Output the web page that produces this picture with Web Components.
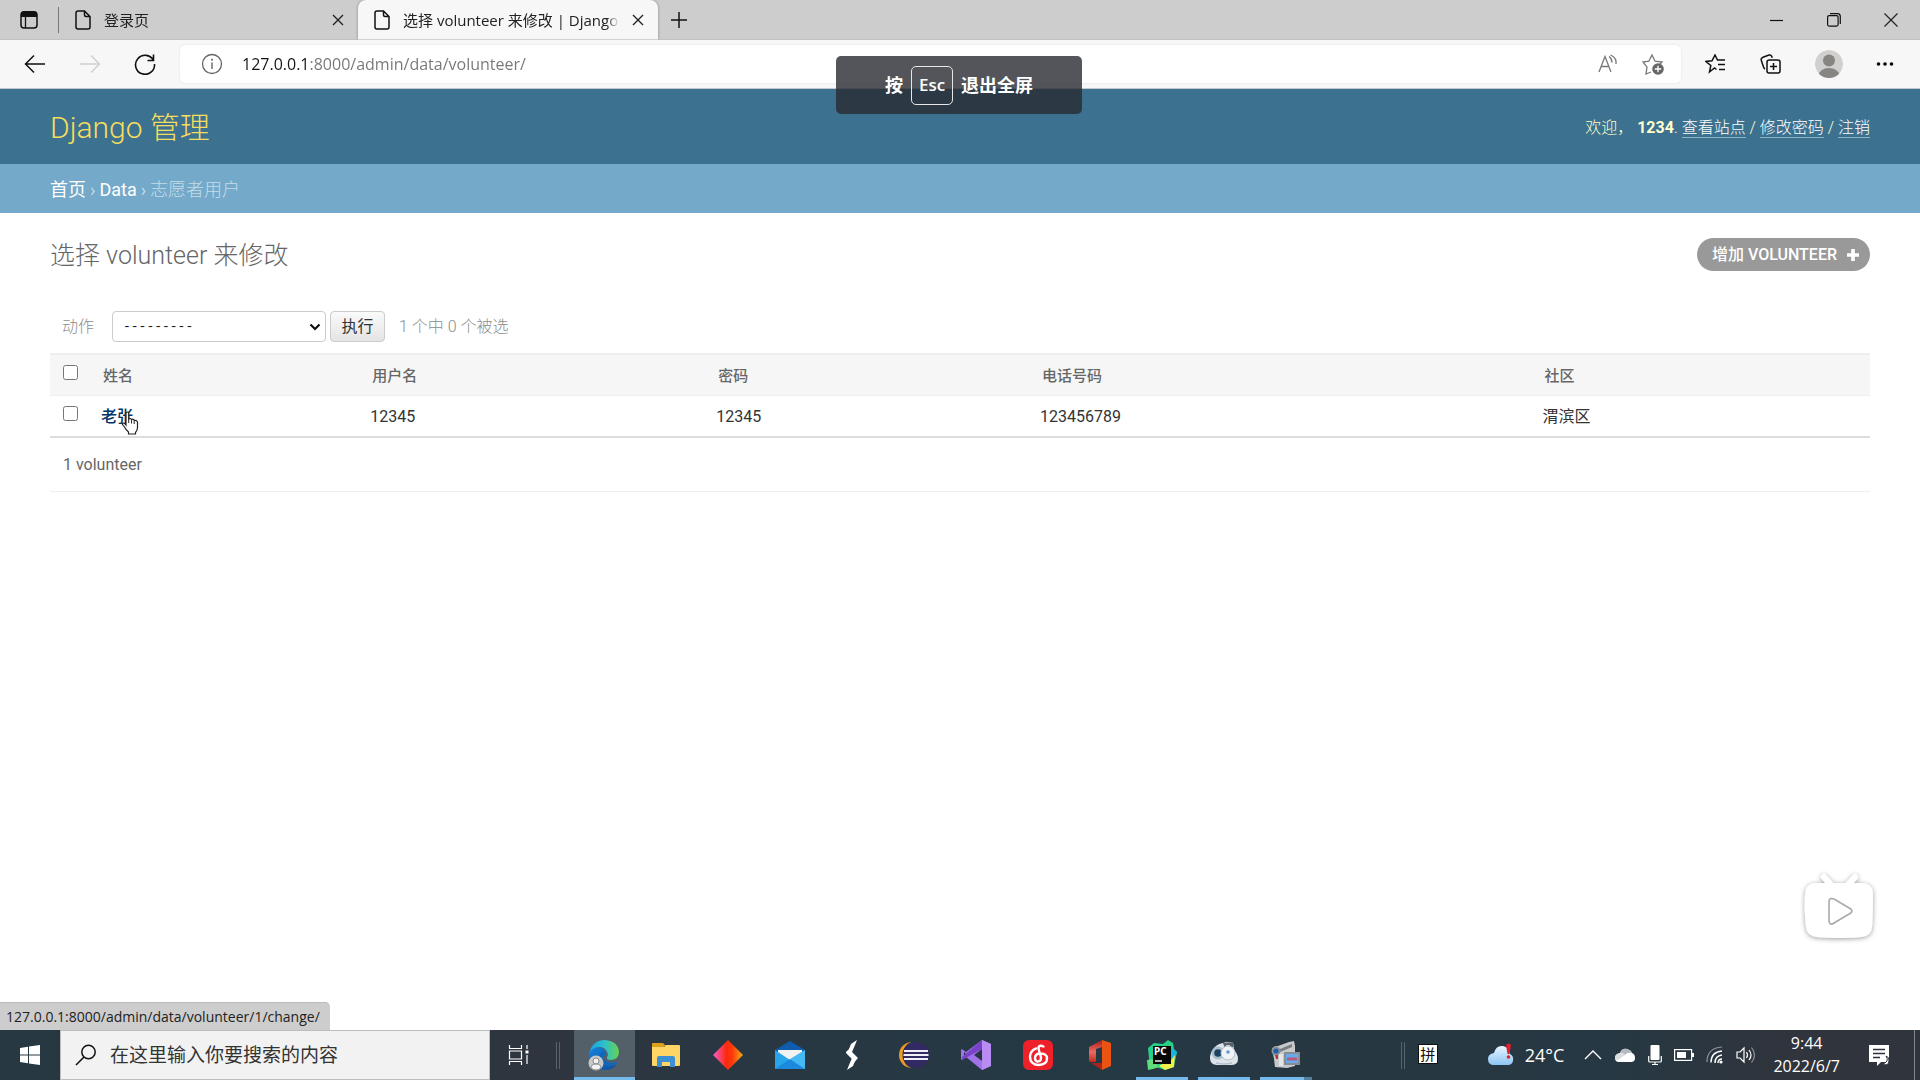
<!DOCTYPE html>
<html lang="zh-CN">
<head>
<meta charset="utf-8">
<meta name="viewport" content="width=device-width, initial-scale=1">
<title>选择 volunteer 来修改 | Django 站点管理员</title>
<style>
  :root {
    --ui: "Open Sans", "Noto Sans CJK SC", sans-serif;
    --admin: Roboto, "Noto Sans CJK SC", sans-serif;
  }
  html, body { height: 100%; }
  body { margin: 0; overflow: hidden; background: #fff; font-family: var(--ui); }
</style>
</head>
<body>
<desktop-screen></desktop-screen>

<script>
const base = `*{box-sizing:border-box}button,input,select{font:inherit;color:inherit;margin:0}button{display:inline-flex;align-items:center;justify-content:center;border:0;background:none;padding:0}a{color:inherit;text-decoration:none}`;

function define(name, css, html) {
  const template = document.createElement('template');
  template.innerHTML = `<style>${base}${css}</style>${html}`;
  customElements.define(name, class extends HTMLElement {
    constructor() {
      super();
      this.attachShadow({ mode: 'open' }).append(template.content.cloneNode(true));
    }
  });
}

/* name: [width, height, markup] */
const icons = {
  tabs: [18, 20, `<rect x="1" y="2" width="16" height="16" rx="3" fill="none" stroke="#111" stroke-width="1.5"/><path d="M1 4q0-3 3-3h10q3 0 3 3v3H1z" fill="#111"/><path d="M5.500 7v11" stroke="#111" stroke-width="1.300"/>`],
  page: [16, 20, `<path d="M3 1h6.500L15 6.500V17q0 2-2 2H3q-2 0-2-2V3q0-2 2-2zM9.500 1v4q0 1.500 1.500 1.500h4" fill="none" stroke="#111" stroke-width="1.500"/>`],
  close: [12, 12, `<path d="M1 1l10 10M11 1L1 11" stroke="#222" stroke-width="1.400"/>`],
  plus: [18, 18, `<path d="M9 1v16M1 9h16" stroke="#111" stroke-width="1.500"/>`],
  min: [14, 14, `<path d="M0 7.500h13" stroke="#111" stroke-width="1.200"/>`],
  max: [14, 14, `<rect x=".6" y="2.600" width="10.500" height="10.500" rx="1.500" fill="none" stroke="#111" stroke-width="1.200"/><path d="M3 .7h7.500q2.800 0 2.800 2.800v7.500" fill="none" stroke="#111" stroke-width="1.200"/>`],
  exit: [14, 14, `<path d="M.5.5l13 13M13.500.5l-13 13" stroke="#222" stroke-width="1.200"/>`],
  back: [22, 20, `<path d="M21 10H1.500M10 1.500L1.500 10l8.500 8.500" fill="none" stroke="#111" stroke-width="1.500"/>`],
  forward: [22, 20, `<path d="M1 10h19.500M12 1.500l8.500 8.500-8.500 8.500" fill="none" stroke="#cfcfcf" stroke-width="1.500"/>`],
  reload: [22, 22, `<path d="M19.500 7.500A9.500 9.500 0 1 0 20.500 11M19.500 1.500v6h-6" fill="none" stroke="#111" stroke-width="1.600"/>`],
  info: [22, 22, `<circle cx="11" cy="11" r="9.500" fill="none" stroke="#666" stroke-width="1.300"/><path d="M11 9.500V16" stroke="#666" stroke-width="1.400"/><circle cx="11" cy="6.800" r="1" fill="#666"/>`],
  aloud: [20, 20, `<path d="M1 18L7 2.500 13 18M3.200 12.500h7.600M11 2.500q3 2 3 6M12.500 1q6.500 3 5.500 9" fill="none" stroke="#777" stroke-width="1.300"/>`],
  staradd: [22, 22, `<path d="M9 19l-5 2 1-6.800L1 9l5.800-.8L10 2l3 6.200 7 .8-2 2" fill="none" stroke="#777" stroke-width="1.300"/><circle cx="16" cy="16" r="5.800" fill="#666"/><path d="M16 12.800v6.400M12.800 16h6.400" stroke="#fff" stroke-width="1.300"/>`],
  favs: [22, 20, `<path d="M11.500 15.500L9.500 14 4.500 18l1.300-6.500L1 7.500l6-.7L10 1l2.500 5H20M13 10.500h7M14 15.500h6" fill="none" stroke="#111" stroke-width="1.500"/>`],
  collect: [22, 20, `<path d="M5 15q-1-.5-1.500-2L1.200 6Q.8 4 3 3.200L9 1q2-.5 2.800 1.500l.4 1.200M9.500 6h8Q20 6 20 8v9q0 2-2 2H9q-2 0-2-2V8q0-2 2.500-2M13.500 9v7M10 12.500h7" fill="none" stroke="#111" stroke-width="1.500"/>`],
  avatar: [28, 28, `<clipPath id="c"><circle cx="14" cy="14" r="14"/></clipPath><g clip-path="url(#c)"><circle cx="14" cy="14" r="14" fill="#d2d0ce"/><circle cx="14" cy="10.500" r="6" fill="#878581"/><ellipse cx="14" cy="26" rx="10.500" ry="8" fill="#878581"/></g>`],
  dots: [18, 6, `<circle cx="2.500" cy="3" r="1.800"/><circle cx="9" cy="3" r="1.800"/><circle cx="15.500" cy="3" r="1.800"/>`],
  add: [14, 14, `<path d="M7 1v12M1 7h12" stroke="#fff" stroke-width="3.600"/>`],
  chevron: [12, 8, `<path d="M1.500 1.500L6 6l4.500-4.500" fill="none" stroke="#111" stroke-width="2.200"/>`],
  hand: [18, 24, `<path d="M5 14V2.500Q5 1 6.300 1T7.700 2.500V9q0-1.500 1.300-1.500T10.500 9v.5q0-1.300 1.300-1.300T13.200 9.500v1q0-1.200 1.200-1.200T16.500 11v5.500q0 3-2 5v1.500H7.500v-2Q5 19 3.500 16L1.500 13.500Q1 12 2.200 12 3.500 12 5 14z" fill="#fff" stroke="#222" stroke-width="1.200"/><path d="M7.700 9v3M10.500 9.500v3M13.200 10.500v2.500" stroke="#222"/>`],
  tv: [80, 80, `<defs><filter id="s" x="-20%" y="-20%" width="140%" height="140%"><feDropShadow dx="0" dy="1" stdDeviation="2.500" flood-opacity=".4"/></filter><filter id="p" x="-20%" y="-20%" width="140%" height="140%"><feGaussianBlur stdDeviation=".7"/></filter></defs><g filter="url(#s)"><path d="M25 11l8 9M56 11l-8 9" stroke="#fff" stroke-width="6" stroke-linecap="round"/><path d="M18 17h44q12 0 12 12 0 14-1 32-.5 9-11 10-22 2-44 0Q8 70 7 61 5 44 6 29 6 17 18 17z" fill="#fff"/></g><path d="M30 36q0-5 5-3l16 9.500q4 2.500 0 5L35 57q-4 3-5-2z" fill="#fff" stroke="#aaa" stroke-width="1.600" filter="url(#p)"/>`],
  start: [20, 20, `<path d="M0 3l8-1.200V9.500H0zM9 1.600L20 0v9.500H9zM0 10.500h8v7.700L0 17zM9 10.500h11V20L9 18.400z" fill="#fff"/>`],
  search: [22, 22, `<circle cx="13.500" cy="8" r="6.700" fill="none" stroke="#111" stroke-width="1.500"/><path d="M9 13L1 21" stroke="#111" stroke-width="1.600"/>`],
  taskview: [22, 20, `<path d="M1.500 0v3.500h12V0M1.500 20v-3.500h12V20M1.500 6h12v8h-12zM19 0v4M19 10v9" fill="none" stroke="#fff" stroke-width="1.200"/><path d="M17.500 5.500h3v3h-3z" fill="#fff"/>`],
  edge: [32, 32, `<defs><linearGradient id="a"><stop stop-color="#1f9fe0"/><stop offset=".5" stop-color="#2bbfd0"/><stop offset="1" stop-color="#66d34f"/></linearGradient><linearGradient id="b" x2="1" y2="1"><stop stop-color="#1583dc"/><stop offset="1" stop-color="#0c4c9c"/></linearGradient></defs><path d="M1 15Q3 8 10 8q8 1 8 8-5 2-4 6 2 5 9 5 4 0 6-2-4 6-12 6Q2 30 1 15z" fill="url(#b)"/><path d="M1 15Q4 1 17 1q13 1 14 12 0 7-8 8-5 0-4-3 2-2 0-5-2-5-8-5Q4 8 1 15z" fill="url(#a)"/><path d="M13 14q-5 6 1 11 6 4 15 0l1-2q-9 2-13-2-3-3-1-7 0-3-3 0z" fill="#1266b8"/><circle cx="8" cy="24" r="7.500" fill="#c9c9c9"/><circle cx="8" cy="22" r="3" fill="#f2f2f2" stroke="#8a8a8a"/><path d="M3 29q0-4 5-4t5 4q-5 4-10 0z" fill="#f2f2f2" stroke="#8a8a8a"/>`],
  folder: [30, 26, `<path d="M1 2q0-1 1-1h10l3 3h-2v8H1z" fill="#e0a11a"/><path d="M1 5h12l2-2h13q1 0 1 1v19q0 1-1 1H2q-1 0-1-1z" fill="#ffd666"/><path d="M6 25V16q0-2 2-2h14q2 0 2 2v9h-5v-5h-8v5z" fill="#3d8fd6"/>`],
  diamond: [30, 30, `<defs><linearGradient id="d"><stop stop-color="#f55fd0"/><stop offset=".45" stop-color="#fb2a0d"/><stop offset=".65" stop-color="#fb3a0d"/><stop offset="1" stop-color="#f5b010"/></linearGradient></defs><path d="M15 0l15 15-15 15L0 15z" fill="url(#d)"/>`],
  mail: [30, 28, `<path d="M0 9L15 0l15 9v6H0z" fill="#0e5cab"/><path d="M3 9h24v10H3z" fill="#f2f2f2"/><path d="M0 9l15 10L30 9v19H0z" fill="#28a4ea"/><path d="M0 28h30L15 18z" fill="#1b8ade"/><path d="M30 9v19L15 18z" fill="#46b9f5"/>`],
  bolt: [16, 30, `<path d="M2 12l6-6v6l6 6-6 7v-6l-6-6z" fill="#fff"/><path d="M13 0L7 4 5 9l3 3 3-7zM3 30l6-4 2-5-3-3-3 7z" fill="#fff"/>`],
  eclipse: [32, 30, `<circle cx="14" cy="15" r="13" fill="#f09a26"/><circle cx="18.500" cy="15" r="14" fill="#2a3742"/><circle cx="18" cy="15" r="13" fill="#322a62"/><path d="M6 11h24M5.500 15h25M6 19h24" stroke="#f1eefa" stroke-width="2.200"/>`],
  vs: [30, 30, `<path d="M21 0l9 4v22l-9 4L5 17l-4 3-1-1V10l1-1 4 3z" fill="#a273e8"/><path d="M21 0v30l9-4V4z" fill="#b98cf4"/><path d="M21 9v12l-8-6zM3 12v6l3-3z" fill="#263743"/><path d="M1 20L21 9V0L1 17z" fill="#7a42c8"/>`],
  music: [30, 30, `<rect width="30" height="30" rx="6" fill="#ee2029"/><path d="M20.500 6.500q-4-2-5 1 0 1 .5 3l2 7q0 4-3 4t-3-3.500q0-3.500 4-4.500 8-.5 8 5 0 6-8.500 6.500-8.500-.5-8.500-8.500.5-6 6-8" fill="none" stroke="#fff" stroke-width="2.400" stroke-linecap="round"/>`],
  office: [24, 30, `<defs><linearGradient id="o" x2="0" y2="1"><stop stop-color="#a51d16"/><stop offset=".55" stop-color="#ee6a65"/><stop offset="1" stop-color="#c32a16"/></linearGradient></defs><path d="M1 7L14 0v7L8 9v13H2l-1-1z" fill="url(#o)"/><path d="M14 0l9 3v23l-9 4z" fill="#eb5312"/><path d="M3 23h11v7z" fill="#a92519"/>`],
  pycharm: [30, 30, `<path d="M1 8l6-5 9 1 5-4 5 3 1 6 3 3-2 9-1 6-9 3-9-3-6 2z" fill="#24d186"/><path d="M22 20l5 2v5l-9 3-6-4z" fill="#eff04c"/><path d="M24 8l6 4-3 9-3 1z" fill="#15b5ea"/><path d="M24 20l4-5-1 11-4 1z" fill="#f4ee44"/><path d="M0 20l6-1 6 8-6 2-5 1z" fill="#5fdd7a"/><rect x="6" y="6" width="18" height="18" fill="#080808"/><path d="M8 21h7" stroke="#fff" stroke-width="1.400"/><text x="7" y="15" font-family="Noto Sans" font-weight="700" font-size="10" fill="#fff">PC</text>`],
  camera: [30, 28, `<path d="M5 7q3-4 9-5l3-1h7l1 8q4 4 4 9 0 6-7 6H8q-7 0-7-7Q1 12 5 7z" fill="#dde4ea"/><path d="M14 2l10-1v5l-8 2z" fill="#59626b"/><path d="M17 4h4v3h-4z" fill="#cfd5da"/><circle cx="9" cy="12" r="6.500" fill="#a9bfce"/><circle cx="9" cy="12" r="3.800" fill="#1c4161"/><circle cx="19" cy="12" r="7" fill="#f0f4f7" stroke="#b3bec8"/><circle cx="19" cy="11" r="1.800" fill="#5c9ad4"/><path d="M7 22q8 2 16 0" stroke="#b4c0ca" stroke-width="1.500" fill="none"/>`],
  camcorder: [30, 28, `<path d="M1 8q1-3 6-3l11-4 5-1 1 5v20l-8 2-12-1-1-8z" fill="#c7c9cb"/><path d="M9 8l12-5v3L9 11z" fill="#777c80"/><circle cx="5" cy="10" r="4.500" fill="#8a9296"/><circle cx="5" cy="10" r="2.600" fill="#1d5fae"/><path d="M4 14h3v4H5z" fill="#b2392f"/><path d="M8 13h4v12H8z" fill="#e4e5e6"/><rect x="13" y="11" width="16" height="13" fill="#868e94"/><rect x="15" y="13" width="12" height="9" fill="#69a9ee"/><path d="M16 18h10" stroke="#b65a7c" stroke-width="3"/>`],
  weather: [28, 24, `<defs><linearGradient id="w" x2="0" y2="1"><stop stop-color="#e8f6ff"/><stop offset="1" stop-color="#8cc5f3"/></linearGradient></defs><path d="M7 22q-6 0-6-6 0-5 6-6Q9 2 16 3q6 1 7 8 4 2 3 7-1 4-5 4z" fill="url(#w)"/><path d="M19 2q3-3 5 0l-1.500 9h-2z" fill="#e41e2d"/><circle cx="21.500" cy="14" r="1.800" fill="#e41e2d"/>`],
  up: [18, 12, `<path d="M1 10l8-8 8 8" fill="none" stroke="#fff" stroke-width="1.400"/>`],
  cloud: [22, 16, `<path d="M5 15Q1 15 1 11t5-5q2-5 7-4 4 1 5 4 3 1 3 5 0 4-4 4z" fill="#fff"/><path d="M6 6q2-5 7-4 4 1 5 4-5-1-7 2Q8 5 6 6z" fill="#b5bac0"/><path d="M1 12q-1-5 5-6 3 0 5 2l-7 5z" fill="#d9dde0"/>`],
  mic: [14, 20, `<rect x="2.500" width="9" height="15" rx="1" fill="#fff"/><path d="M.7 11v5q0 1 1 1h10.600q1 0 1-1v-5M7 17v3M4 19.500h6" fill="none" stroke="#fff" stroke-width="1.200"/>`],
  battery: [20, 12, `<rect x=".6" y=".6" width="17" height="10.800" fill="none" stroke="#fff" stroke-width="1.200"/><path d="M3 3h9v6H3zM18 4h2v4h-2z" fill="#fff"/>`],
  wifi: [18, 18, `<path d="M1 16Q1 2 16 1" fill="none" stroke="#8c959d" stroke-width="1.200"/><path d="M5 16.500Q5 6 16 5M9 17q0-7 7-8M12 17q0-4 4-4" fill="none" stroke="#fff" stroke-width="1.400"/><circle cx="15" cy="16" r="1.600" fill="#fff"/>`],
  volume: [20, 18, `<path d="M1 6h3l4-4v14l-4-4H1z" fill="none" stroke="#fff" stroke-width="1.200"/><path d="M10.500 6q2 3 0 6M13 4q4 5 0 10" fill="none" stroke="#fff" stroke-width="1.200"/><path d="M15.500 1.500q6 7.500 0 15" fill="none" stroke="#8c959d" stroke-width="1.200"/>`],
  notice: [22, 22, `<path d="M1 1h20v17h-8l-4 4v-4H1z" fill="#fff"/><path d="M5 5.500h12M5 9.500h12M5 13.500h7" stroke="#2c333c" stroke-width="1.300"/><path d="M18 12q4 6-4 8 7 3 7-4 0-3-3-4z" fill="#fff" stroke="#2c333c"/>`]
};

customElements.define('ui-icon', class extends HTMLElement {
  connectedCallback() {
    if (this.shadowRoot) return;
    const [w, h, body] = icons[this.getAttribute('name')];
    this.attachShadow({ mode: 'open' }).innerHTML =
      `<style>:host{display:inline-flex;flex:none}svg{display:block}</style><svg width="${w}" height="${h}" viewBox="0 0 ${w} ${h}" aria-hidden="true">${body}</svg>`;
  }
});

/* Browser chrome */
define('browser-tab', `
  :host{display:flex;align-items:center;width:299px;height:40px;padding:0 14px 0 16px;gap:13px;font-size:15px;line-height:22px;color:#222}
  :host([active]){background:#f7f7f7;border-radius:8px 8px 0 0;box-shadow:0 0 3px rgba(0,0,0,.35);clip-path:inset(0 -4px 0 -4px);width:300px}
  .t{flex:1;min-width:0;overflow:hidden;white-space:nowrap;mask-image:linear-gradient(90deg,#000 calc(100% - 12px),transparent)}`,
  `<ui-icon name="page"></ui-icon><span class="t"><slot></slot></span><button aria-label="关闭标签页"><ui-icon name="close"></ui-icon></button>`);

define('tab-strip', `
  :host{display:flex;align-items:center;height:40px;flex:none;background:#cdcdcd;border-bottom:1px solid #c2c2c2}
  .menu{padding:0 20px;height:26px;border-right:1px solid #777}
  .new{margin-left:12px}
  .win{margin-left:auto;display:flex;gap:43px;padding-right:22px}`,
  `<button class="menu" aria-label="标签操作菜单"><ui-icon name="tabs"></ui-icon></button>
   <browser-tab>登录页</browser-tab><browser-tab active>选择 volunteer 来修改 | Django 站点管理员</browser-tab>
   <button class="new" aria-label="新建标签页"><ui-icon name="plus"></ui-icon></button>
   <div class="win"><button aria-label="最小化"><ui-icon name="min"></ui-icon></button><button aria-label="还原"><ui-icon name="max"></ui-icon></button><button aria-label="关闭"><ui-icon name="exit"></ui-icon></button></div>`);

define('address-bar', `
  :host{display:flex;align-items:center;height:49px;flex:none;background:#f7f7f7;border-bottom:1px solid #c4c8ca;padding:0 26px 0 24px}
  .nav{display:flex;align-items:center;gap:33px;width:156px}
  .box{flex:1;display:flex;align-items:center;height:38px;background:#fff;border-radius:6px;padding:0 17px 0 21px;box-shadow:0 0 3px rgba(0,0,0,.08)}
  input{flex:1;min-width:0;border:0;outline:0;padding:0;margin-left:19px;height:28px;font-size:16px;color:#767676;
    background:linear-gradient(90deg,#151515 67px,#767676 67px);background-clip:text;-webkit-background-clip:text;-webkit-text-fill-color:transparent}
  .in{display:flex;gap:24px;align-items:center}
  .tools{display:flex;align-items:center;gap:33px;padding-left:24px}`,
  `<div class="nav"><button aria-label="后退"><ui-icon name="back"></ui-icon></button><button aria-label="前进"><ui-icon name="forward"></ui-icon></button><button aria-label="刷新"><ui-icon name="reload"></ui-icon></button></div>
   <div class="box"><ui-icon name="info"></ui-icon><input aria-label="地址" value="127.0.0.1:8000/admin/data/volunteer/">
   <div class="in"><button aria-label="大声朗读"><ui-icon name="aloud"></ui-icon></button><button aria-label="添加到收藏夹"><ui-icon name="staradd"></ui-icon></button></div></div>
   <div class="tools"><button aria-label="收藏夹"><ui-icon name="favs"></ui-icon></button><button aria-label="集锦"><ui-icon name="collect"></ui-icon></button><button aria-label="个人资料"><ui-icon name="avatar"></ui-icon></button><button aria-label="设置及其他"><ui-icon name="dots"></ui-icon></button></div>`);

define('fullscreen-hint', `
  :host{position:absolute;left:calc(50% - 124px);top:56px;width:246px;height:58px;display:flex;align-items:center;justify-content:center;gap:8px;border-radius:5px;background:rgba(40,43,49,.8);color:#fff;font-size:18px;line-height:24px;font-weight:700}
  kbd{font:inherit;font-size:17px;font-weight:600;border:1px solid #e6e6e6;border-radius:5px;width:42px;height:39px;display:flex;align-items:center;justify-content:center}`,
  `<span>按</span><kbd>Esc</kbd><span>退出全屏</span>`);

/* Admin site */
define('admin-header', `
  :host{display:flex;align-items:center;justify-content:space-between;height:75px;flex:none;padding:3px 50px 0;background:#3c7190;color:#ffc}
  h1{margin:0;font-size:30px;font-weight:300;line-height:36px;color:#f5dd5d}
  .u{font-size:16px;font-weight:300;line-height:20px;white-space:pre}
  .u a{color:#fff;border-bottom:1px solid #8fb1c4}
  b{font-weight:700}`,
  `<h1>Django 管理</h1><div class="u">欢迎， <b>1234</b>. <a href="#">查看站点</a> / <a href="#">修改密码</a> / <a href="#">注销</a></div>`);

define('bread-crumbs', `
  :host{display:flex;align-items:center;gap:4px;height:49px;flex:none;padding:2px 50px 0;background:#74a9c9;color:#c4dce8;font-size:18px;line-height:24px}
  a{color:#fff}span{font-weight:300}i{font-style:normal}`,
  `<a href="#">首页</a><i>›</i><a href="#">Data</a><i>›</i><span>志愿者用户</span>`);

define('page-title', `
  :host{display:flex;align-items:flex-start;justify-content:space-between;padding:25px 0 0}
  h2{margin:0;font-size:25px;line-height:36px;font-weight:300;color:#666}
  a{display:flex;align-items:center;gap:9px;height:33px;border-radius:17px;padding:0 10px 0 15px;background:#999;color:#fff;font-size:16px;line-height:24px;font-weight:500;text-transform:uppercase}`,
  `<h2><slot></slot></h2><a href="#">增加 volunteer<ui-icon name="add"></ui-icon></a>`);

define('action-bar', `
  :host{display:flex;align-items:center;padding:0 12px;margin-top:37px;height:31px;color:#8c8c8c;font-size:16px;line-height:24px;font-weight:300}
  label{display:flex;align-items:center;gap:18px}
  .s{display:grid;align-items:center;width:214px}
  .s>*{grid-area:1/1}
  .s ui-icon{justify-self:end;margin-right:5px;pointer-events:none}
  select{appearance:none;width:100%;height:31px;padding:0 10px;border:1px solid #ccc;border-radius:4px;background:#fff;color:#111;font:13px "Liberation Mono",monospace}
  button{margin:0 14px 0 4px;width:55px;height:31px;border:1px solid #ccc;border-radius:4px;background:linear-gradient(#fafafa,#e4e4e4);color:#333;font-weight:400}`,
  `<label>动作 <span class="s"><select><option>---------</option></select><ui-icon name="chevron"></ui-icon></span></label><button>执行</button><span>1 个中 0 个被选</span>`);

define('result-list', `
  :host{display:block;margin-top:11px;color:#333;font-size:16px}
  table{width:100%;border-collapse:separate;border-spacing:0;table-layout:fixed}
  th,td{height:42px;padding:2px 10px 0;text-align:left;line-height:24px;border-bottom:1px solid #eee;vertical-align:middle}
  td{border-bottom:2px solid #ddd}
  thead th{background:#f6f6f6;border-top:2px solid #eee;height:43px;font-size:15px;font-weight:500;color:#666;padding-left:12px}
  thead th:first-child,th:first-child,td:first-child{padding:0 0 0 13px}
  input{display:block;width:15px;height:15px;margin-bottom:5px}
  tbody a{position:relative;font-weight:500;color:#036}
  tbody a ui-icon{position:absolute;left:20px;top:4px}
  tfoot td{height:54px;border-bottom:1px solid #eee;color:#666}
  .c0{width:41px}.c1{width:14.8%}.c2{width:19%}.c3{width:17.8%}.c4{width:27.6%}`,
  `<table><colgroup><col class="c0"><col class="c1"><col class="c2"><col class="c3"><col class="c4"><col></colgroup>
   <thead><tr><th><input type="checkbox" aria-label="全选"></th><th>姓名</th><th>用户名</th><th>密码</th><th>电话号码</th><th>社区</th></tr></thead>
   <tbody><tr><td><input type="checkbox" aria-label="选择老张"></td><td><a href="#">老张<ui-icon name="hand"></ui-icon></a></td><td>12345</td><td>12345</td><td>123456789</td><td>渭滨区</td></tr></tbody>
   <tfoot><tr><td colspan="6">1 volunteer</td></tr></tfoot></table>`);

define('admin-page', `
  :host{flex:1;min-height:0;display:flex;flex-direction:column;position:relative;font-family:var(--admin);background:#fff}
  main{padding:0 50px}
  .tv{position:absolute;right:41px;bottom:84px}
  .status{position:absolute;left:0;bottom:0;height:28px;padding:0 10px 0 6px;background:#cdcdcd;border-radius:0 5px 0 0;border-top:1px solid #bbb;font:14px/28px var(--ui);color:#222}`,
  `<admin-header></admin-header><bread-crumbs></bread-crumbs>
   <main><page-title>选择 volunteer 来修改</page-title><action-bar></action-bar><result-list></result-list></main>
   <button class="tv" aria-label="播放"><ui-icon name="tv"></ui-icon></button>
   <div class="status">127.0.0.1:8000/admin/data/volunteer/1/change/</div>`);

/* Windows taskbar */
define('task-app', `
  :host{display:flex;width:62px;height:50px;justify-content:center}
  button{width:61px;height:50px;border-bottom:3px solid transparent;padding-top:2px}
  :host([running]) button{width:52px;border-bottom-color:#76b9ed}
  :host([active]) button{width:61px;background-color:#53606a}
  :host([grouped]) button{border-image:linear-gradient(90deg,#76b9ed 80%,#54809f 80%) 3}`,
  `<button><slot></slot></button>`);

define('system-tray', `
  :host{display:flex;align-items:center;margin-left:auto;height:50px;color:#fff;padding-right:5px}
  .sep{width:4px;height:27px;border:solid #59636c;border-width:0 1px}
  .ime{width:20px;height:20px;background:#fff;border:1px solid #111;color:#111;font-size:15px;line-height:18px;margin:0 49px 3px 13px}
  .w{gap:10px;font-size:18px;margin-right:20px}
  .i{display:flex;align-items:center;gap:12px}
  .clock{flex-direction:column;margin:0 28px 0 17px;font-size:16px;line-height:23px}
  .end{border-right:1px solid #818990;height:50px;padding-right:24px}`,
  `<span class="sep"></span><button class="ime" aria-label="输入法">拼</button>
   <button class="w"><ui-icon name="weather"></ui-icon>24°C</button>
   <div class="i"><ui-icon name="up"></ui-icon><ui-icon name="cloud"></ui-icon><ui-icon name="mic"></ui-icon><ui-icon name="battery"></ui-icon><ui-icon name="wifi"></ui-icon><ui-icon name="volume"></ui-icon></div>
   <button class="clock"><span>9:44</span><span>2022/6/7</span></button>
   <button class="end" aria-label="通知"><ui-icon name="notice"></ui-icon></button>`);

define('task-bar', `
  :host{display:flex;align-items:center;height:50px;flex:none;background:linear-gradient(90deg,#273843 0,#293640 22%,#2f353e 28%,#293742 38%,#243944 55%,#273742 70%,#263843 84%,#30343c 93%,#30343c)}
  .start{width:60px;height:50px}
  .search{display:flex;align-items:center;gap:13px;width:430px;height:50px;padding:0 14px;background:#f2f2f2;border:1px solid #bcbcbc}
  input{flex:1;min-width:0;border:0;outline:0;padding:0;background:none;font-size:19px;color:#222}
  input::placeholder{color:#333;opacity:1}
  .view{margin:0 26px 0 18px}
  .sep{width:4px;height:27px;border:solid #59636c;border-width:0 1px;margin-right:13px}`,
  `<button class="start" aria-label="开始"><ui-icon name="start"></ui-icon></button>
   <label class="search"><ui-icon name="search"></ui-icon><input aria-label="搜索" placeholder="在这里输入你要搜索的内容"></label>
   <button class="view" aria-label="任务视图"><ui-icon name="taskview"></ui-icon></button><span class="sep"></span>
   <task-app running active><ui-icon name="edge"></ui-icon></task-app><task-app><ui-icon name="folder"></ui-icon></task-app>
   <task-app><ui-icon name="diamond"></ui-icon></task-app><task-app><ui-icon name="mail"></ui-icon></task-app>
   <task-app><ui-icon name="bolt"></ui-icon></task-app><task-app><ui-icon name="eclipse"></ui-icon></task-app>
   <task-app><ui-icon name="vs"></ui-icon></task-app><task-app><ui-icon name="music"></ui-icon></task-app>
   <task-app><ui-icon name="office"></ui-icon></task-app><task-app running><ui-icon name="pycharm"></ui-icon></task-app>
   <task-app running><ui-icon name="camera"></ui-icon></task-app><task-app running grouped><ui-icon name="camcorder"></ui-icon></task-app>
   <system-tray></system-tray>`);

define('desktop-screen', `:host{display:flex;flex-direction:column;height:100vh;position:relative}`,
  `<tab-strip></tab-strip><address-bar></address-bar><admin-page></admin-page><task-bar></task-bar><fullscreen-hint></fullscreen-hint>`);
</script>
</body>
</html>
